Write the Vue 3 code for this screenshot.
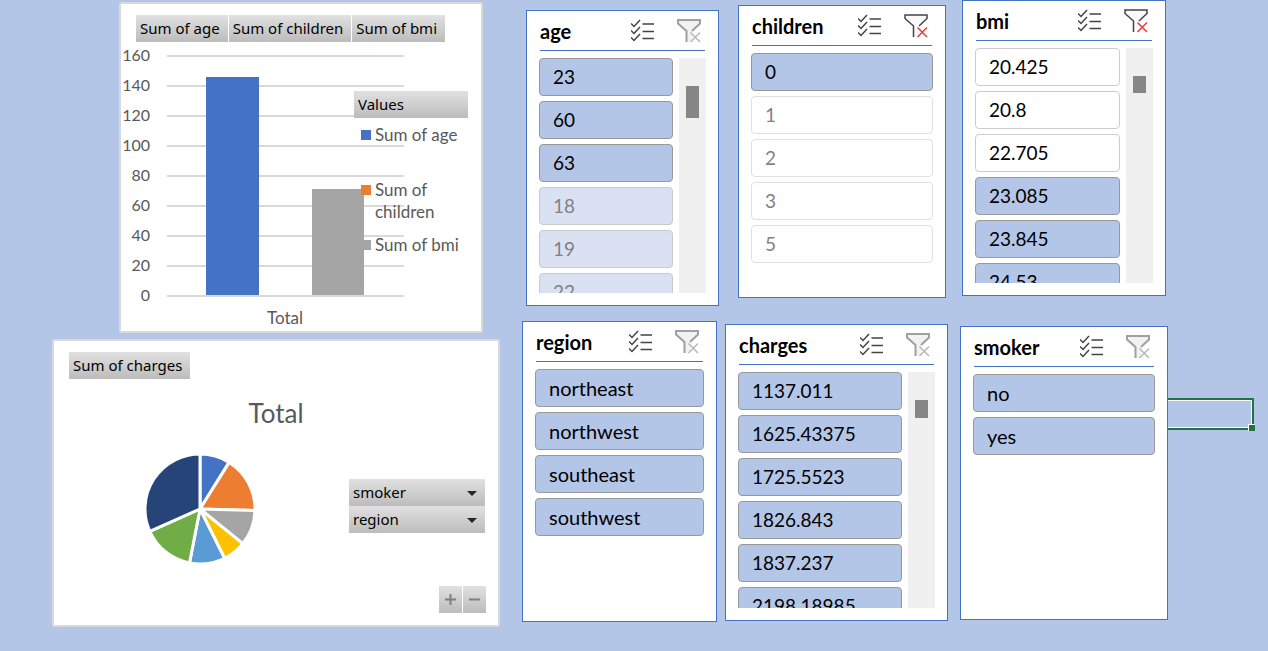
<script setup>
const on = (label) => ({ label, kind: 'on' })
const onEmpty = (label) => ({ label, kind: 'on-empty' })
const off = (label) => ({ label, kind: 'off' })
const offEmpty = (label) => ({ label, kind: 'off-empty' })

// Worksheet objects float freely over the cells: x, y, w, h are their anchors.
const slicers = [
  { name: 'age', x: 526, y: 10, w: 193, h: 296, filtered: false, thumb: 32,
    items: [on('23'), on('60'), on('63'), onEmpty('18'), onEmpty('19'), onEmpty('22')] },
  { name: 'children', x: 738, y: 5, w: 208, h: 293, filtered: true, thumb: 0,
    items: [on('0'), offEmpty('1'), offEmpty('2'), offEmpty('3'), offEmpty('5')] },
  { name: 'bmi', x: 962, y: 0, w: 204, h: 296, filtered: true, thumb: 17,
    items: [off('20.425'), off('20.8'), off('22.705'), on('23.085'), on('23.845'), on('24.53')] },
  { name: 'region', x: 522, y: 321, w: 195, h: 301, filtered: false, thumb: 0, words: true,
    items: [on('northeast'), on('northwest'), on('southeast'), on('southwest')] },
  { name: 'charges', x: 725, y: 324, w: 223, h: 297, filtered: false, thumb: 18,
    items: [on('1137.011'), on('1625.43375'), on('1725.5523'), on('1826.843'), on('1837.237'), on('2198.18985')] },
  { name: 'smoker', x: 960, y: 326, w: 208, h: 294, filtered: false, thumb: 0, words: true,
    items: [on('no'), on('yes')] },
]

const place = (o) => ({ left: o.x + 'px', top: o.y + 'px', width: o.w + 'px', height: o.h + 'px' })

const ticks = [160, 140, 120, 100, 80, 60, 40, 20, 0]
const valueFields = ['Sum of age', 'Sum of children', 'Sum of bmi']
const legend = [
  { label: 'Sum of age', tone: 'blue' },
  { label: 'Sum of children', tone: 'orange' },
  { label: 'Sum of bmi', tone: 'grey' },
]

const slices = [
  { from: 0, to: 32, color: '#4472c4' },
  { from: 32, to: 91.5, color: '#ed7d31' },
  { from: 91.5, to: 129, color: '#a5a5a5' },
  { from: 129, to: 153.5, color: '#ffc000' },
  { from: 153.5, to: 191, color: '#5b9bd5' },
  { from: 191, to: 246, color: '#70ad47' },
  { from: 246, to: 360, color: '#264478' },
]
const point = (deg) => {
  const a = (deg * Math.PI) / 180
  return `${(56 + 55 * Math.sin(a)).toFixed(2)} ${(56 - 55 * Math.cos(a)).toFixed(2)}`
}
const wedge = (s) => `M56 56L${point(s.from)}A55 55 0 0 1 ${point(s.to)}Z`
</script>

<template>
  <main class="sheet">
    <div class="cell"><span class="handle"></span></div>

    <section class="chart" :style="place({ x: 119, y: 2, w: 364, h: 331 })" aria-label="Bar chart">
      <div class="fields">
        <button v-for="f in valueFields" :key="f" type="button" class="field">{{ f }}</button>
      </div>
      <svg class="plot" viewBox="0 0 360 285" role="img" aria-label="Totals by value">
        <g v-for="(t, i) in ticks" :key="t">
          <rect x="46" :y="9 + i * 30" width="237" height="2" fill="#d9d9d9" />
          <text x="29" :y="15 + i * 30" text-anchor="end">{{ t }}</text>
        </g>
        <rect x="85" y="31" width="53" height="218" fill="#4472c4" />
        <rect x="191" y="143" width="52" height="106" fill="#a5a5a5" />
        <text class="category" x="164" y="278" text-anchor="middle">Total</text>
      </svg>
      <div class="legend">
        <button type="button" class="field wide">Values</button>
        <ul class="keys">
          <li v-for="k in legend" :key="k.label"><i :class="k.tone"></i><span>{{ k.label }}</span></li>
        </ul>
      </div>
    </section>

    <section class="chart pie-chart" :style="place({ x: 52, y: 339, w: 448, h: 288 })" aria-label="Pie chart">
      <div class="fields">
        <button type="button" class="field">Sum of charges</button>
      </div>
      <h2>Total</h2>
      <div class="pie-row">
        <svg class="pie" width="112" height="112" viewBox="0 0 112 112" role="img" aria-label="Charges by smoker and region">
          <path v-for="s in slices" :key="s.from" :d="wedge(s)" :fill="s.color" stroke="#fff" stroke-width="3" stroke-linejoin="round" />
        </svg>
        <div class="axis-fields">
          <label v-for="n in ['smoker', 'region']" :key="n" class="pick">
            <select :aria-label="n"><option>{{ n }}</option></select>
            <svg width="10" height="6" viewBox="0 0 10 6"><path d="M0 0H10L5 5Z" fill="#262626" /></svg>
          </label>
        </div>
      </div>
      <div class="expand">
        <button type="button" class="field step" aria-label="Expand field">
          <svg width="13" height="13" viewBox="0 0 13 13"><path d="M1 6.500H12M6.500 1V12" stroke="#7f7f7f" stroke-width="2" /></svg>
        </button>
        <button type="button" class="field step" aria-label="Collapse field">
          <svg width="13" height="13" viewBox="0 0 13 13"><path d="M1 6.500H12" stroke="#7f7f7f" stroke-width="2" /></svg>
        </button>
      </div>
    </section>

    <section v-for="s in slicers" :key="s.name" :class="['slicer', { words: s.words }]" :style="place(s)" :aria-label="s.name">
      <header>
        <h2>{{ s.name }}</h2>
        <button type="button" class="tool" aria-label="Multi-select">
          <svg width="24" height="24" viewBox="0 0 24 24" fill="none" stroke="#444" stroke-width="1.500">
            <path d="M0 4.500L3 7.500L9 1M0 11.500L3 14.500L9 8M0 18.500L3 21.500L9 15" />
            <path d="M11.500 5H23M11.500 12.500H23M11.500 19.500H23" />
          </svg>
        </button>
        <button type="button" class="tool" :class="{ live: s.filtered }" aria-label="Clear filter">
          <svg width="24" height="24" viewBox="0 0 24 24" fill="none">
            <path class="body" d="M1 1H23V4L15 11V23H9.500V12L1 4Z" />
            <path class="funnel" d="M9.500 23V12L1 4.500V1H23V4.500L15 12" />
            <path class="cross" d="M13.500 13.500L23 23M23 13.500L13.500 23" />
          </svg>
        </button>
      </header>
      <div class="list">
        <div class="items">
          <button v-for="i in s.items" :key="i.label" type="button" :class="['item', i.kind]" :aria-pressed="i.kind.startsWith('on')">{{ i.label }}</button>
        </div>
        <div v-if="s.thumb" class="track"><div class="thumb" :style="{ height: s.thumb + 'px' }"></div></div>
      </div>
    </section>
  </main>
</template>

<style>
body {
  margin: 0;
  background: #b4c6e7;
}
</style>

<style scoped>
.sheet {
  position: relative;
  min-height: 100vh;
  overflow: hidden;
  background: #b4c6e7;
  font-family: Lato, "Liberation Sans", sans-serif;
}
.sheet * {
  box-sizing: border-box;
}
button,
select {
  margin: 0;
  padding: 0;
  border: 0;
  background: none;
  font: inherit;
  color: inherit;
}
h2 {
  margin: 0;
}

.cell {
  position: absolute;
  left: 1140px;
  top: 398px;
  width: 114px;
  height: 32px;
  border: 2px solid #217346;
  box-shadow: inset 0 0 0 1px #fff;
}
.handle {
  position: absolute;
  right: -3px;
  bottom: -3px;
  width: 7px;
  height: 7px;
  background: #217346;
  border: solid #fff;
  border-width: 1px 0 0 1px;
}

.chart,
.slicer {
  position: absolute;
  display: flex;
  flex-direction: column;
  background: #fff;
}
.chart {
  border: 2px solid #d9d9d9;
  border-radius: 2px;
  color: #595959;
}
.fields {
  display: flex;
  gap: 1px;
  padding: 11px 15px 0;
}
.field,
.pick select {
  height: 27px;
  padding: 0 8px 0 4px;
  background: linear-gradient(#e1e1e1, #bcbcbc);
  font: 15px/27px "Noto Sans", sans-serif;
  color: #000;
  text-align: left;
  white-space: nowrap;
}
.plot {
  display: block;
  width: 100%;
  height: 285px;
  margin-top: 4px;
}
.plot text {
  font-size: 16px;
  fill: #595959;
}
.plot .category {
  font-size: 17px;
}
.legend {
  position: absolute;
  left: 233px;
  top: 87px;
  width: 114px;
}
.wide {
  width: 100%;
}
.keys {
  display: flex;
  flex-direction: column;
  gap: 33px;
  margin: 0;
  padding: 6px 0 0 7px;
  list-style: none;
  font-size: 17px;
  line-height: 22px;
}
.keys li {
  display: flex;
  gap: 4px;
}
.keys li:last-child {
  margin-top: -22px;
}
.keys i {
  flex: none;
  width: 10px;
  height: 10px;
  margin-top: 6px;
}
.blue {
  background: #4472c4;
}
.orange {
  background: #ed7d31;
}
.grey {
  background: #a5a5a5;
}

.pie-chart h2 {
  margin-top: 18px;
  font-size: 26px;
  line-height: 32px;
  font-weight: 400;
  text-align: center;
}
.pie-row {
  display: flex;
  justify-content: space-between;
  margin-top: 24px;
  padding: 0 13px 0 90px;
}
.pie {
  display: block;
}
.axis-fields {
  display: flex;
  flex-direction: column;
  width: 136px;
  padding-top: 26px;
}
.pick {
  position: relative;
  display: block;
  height: 27px;
}
.pick select {
  display: block;
  width: 100%;
  appearance: none;
  border-radius: 0;
}
.pick svg {
  position: absolute;
  right: 8px;
  top: 12px;
  pointer-events: none;
}
.expand {
  display: flex;
  justify-content: flex-end;
  gap: 1px;
  margin-top: auto;
  padding: 0 12px 12px;
}
.step {
  display: grid;
  place-items: center;
  width: 23px;
  padding: 0;
}

.slicer {
  padding: 0 12px 12px;
  border: 1px solid #4472c4;
}
.slicer header {
  flex: none;
  display: flex;
  align-items: center;
  gap: 22px;
  height: 40px;
  margin: 0 1px;
  padding-right: 4px;
  border-bottom: 1px solid #4472c4;
}
.slicer h2 {
  flex: 1;
  font-size: 20px;
  line-height: 24px;
  font-weight: 700;
  color: #000;
}
.tool {
  display: block;
  width: 24px;
  height: 24px;
}
.tool svg {
  display: block;
}
.body {
  fill: #f2f2f2;
}
.funnel {
  stroke: #a0a0a0;
  stroke-width: 2;
}
.cross {
  stroke: #b8b8b8;
  stroke-width: 1.500;
}
.live .funnel {
  stroke: #444;
  stroke-width: 1.500;
}
.live .body {
  fill: #fafafa;
}
.live .cross {
  stroke: #e83b3b;
}
.list {
  flex: 1;
  min-height: 0;
  display: flex;
  gap: 6px;
  margin-top: 7px;
  overflow: hidden;
}
.items {
  flex: 1;
  display: flex;
  flex-direction: column;
  gap: 5px;
}
.item {
  flex: none;
  height: 38px;
  padding: 0 13px;
  border: 1px solid #999;
  border-radius: 4px;
  font-size: 19px;
  line-height: 36px;
  text-align: left;
  color: #000;
}
.words .item {
  font-size: 20px;
}
.on {
  background: #b4c6e7;
}
.on-empty {
  background: #dae1f3;
  border-color: #c9c9c9;
  color: #828282;
}
.off {
  border-color: #ccc;
}
.off-empty {
  border-color: #e0e0e0;
  color: #828282;
}
.track {
  width: 27px;
  padding: 28px 7px 0;
  background: #f0f0f0;
}
.thumb {
  background: #868686;
}
</style>
